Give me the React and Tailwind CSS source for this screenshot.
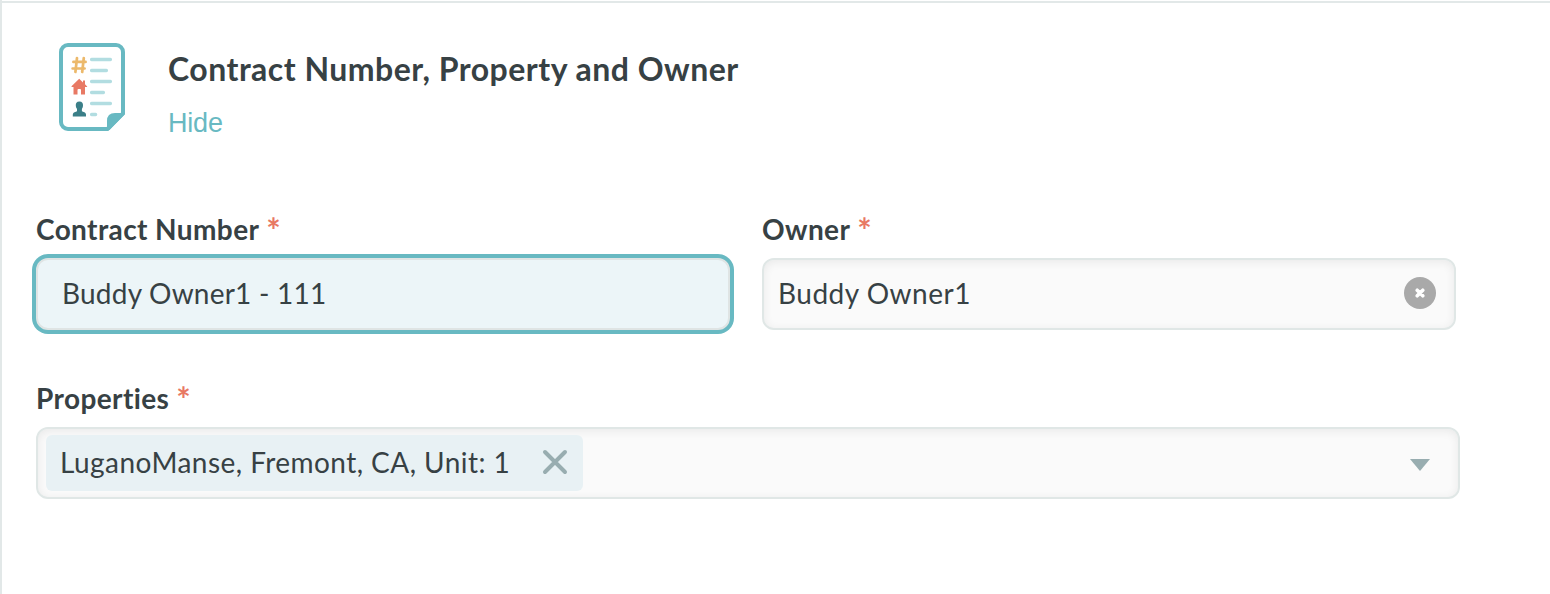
const ContractIcon = () => (
  <svg className="h-[88px] w-[66px] shrink-0" viewBox="0 0 66 88" fill="none">
    <path d="M9 2H57A7 7 0 0 1 64 9V70.5L48.5 86H9A7 7 0 0 1 2 79V9A7 7 0 0 1 9 2Z" stroke="#68b9c2" strokeWidth="4" />
    <path d="M48 87V78Q48 70 56 70H65.5V71.5L50.5 87Z" fill="#68b9c2" />
    {/* text lines */}
    <path
      d="M32.6 16.5H51.4M32.6 27.5H47.4M32.6 38.5H51.4M32.6 49.5H44.4M32.6 60.5H51.4M32.6 71.5H36.6"
      stroke="#b2dde1"
      strokeWidth="3.4"
      strokeLinecap="round"
    />
    <path d="M18 15L16.4 29M24.8 15L23.2 29M14.4 18.9H26.6M13.6 25.5H25.6" stroke="#ecb96b" strokeWidth="2.7" strokeLinecap="round" />
    <path
      d="M20.2 35.8L24 39.4V37.5H26V41.2L28.2 43.4Q28.4 44 27.6 44H26V51.5H22V47Q22 46 21 46H19.5Q18.5 46 18.5 47V51.5H14.5V44H13Q12.2 44 12.5 43.3Z"
      fill="#e87964"
    />
    <path
      d="M20.4 58.6C23.2 58.6 24.2 60.3 24 62.8C23.9 64.5 23.3 65.2 22.9 66V68.2C25.5 69.3 27 69.6 27 71.6V73.4H13.8V71.6C13.8 69.6 15.4 69.3 18 68.2V66C17.5 65.2 16.9 64.5 16.8 62.8C16.6 60.3 17.6 58.6 20.4 58.6Z"
      fill="#3b7f88"
    />
  </svg>
);

const Label = ({ children }) => (
  <label className="flex h-9 items-center gap-[7px] text-[28px] leading-9 font-bold tracking-[0.4px] whitespace-pre">
    {children}
    <span className="h-9 pt-px text-[34px] tracking-normal text-[#e87964]">*</span>
  </label>
);

const App = () => (
  <div
    className="h-[594px] w-full overflow-hidden border-l-2 border-[#e2e8e8] bg-white pt-px text-[#374144]"
    style={{ fontFamily: 'Lato, "Open Sans", sans-serif' }}
  >
    <div className="h-full border-t-2 border-[#e2e8e8] pl-[34px]">
      <div className="flex h-[208px] items-start pt-10 pl-[23px]">
        <ContractIcon />
        <div className="ml-[43px] pt-[5px]">
          <h2 className="text-[32px] leading-[42px] font-bold tracking-[0.49px] whitespace-nowrap">Contract Number, Property and Owner</h2>
          <button className="mt-[15px] block font-['Liberation_Sans'] text-[27px] leading-9 tracking-[-0.2px] text-[#68b9c2]">Hide</button>
        </div>
      </div>

      <div className="flex gap-8">
        <div className="w-[694px]">
          <Label>Contract Number</Label>
          <input
            className="mt-[11px] block h-[72px] w-full rounded-xl border-2 border-[#dfe4e4] bg-[#ecf5f8] px-6 pb-0.5 text-[28px] tracking-[0.22px] ring-4 ring-[#68b9c2] outline-none"
            defaultValue="Buddy Owner1 - 111"
          />
        </div>
        <div className="w-[694px]">
          <Label>Owner</Label>
          <div className="mt-[11px] flex h-[72px] items-center justify-between rounded-xl border-2 border-[#e0e7e6] bg-[#fafafa] pr-[18px] pl-[14px] text-[28px] tracking-[0.5px] shadow-[inset_0_2px_10px_rgba(0,0,0,0.07)]">
            <span className="pb-0.5">Buddy Owner1</span>
            <button className="mb-0.5 flex size-8 items-center justify-center rounded-full bg-[#a9a9a9]">
              <svg className="size-[10px]" viewBox="0 0 9 9">
                <path d="M2 2L7 7M7 2L2 7" stroke="white" strokeWidth="3.2" strokeLinecap="round" />
              </svg>
            </button>
          </div>
        </div>
      </div>

      <div className="mt-[50px] w-[1424px]">
        <Label>Properties</Label>
        <div className="mt-[11px] flex h-[72px] items-center justify-between rounded-xl border-2 border-[#e0e7e6] bg-[#fafafa] pr-7 pl-2 text-[28px] tracking-[0.45px] shadow-[inset_0_2px_10px_rgba(0,0,0,0.07)]">
          <div className="flex h-14 w-[537px] items-center justify-between rounded-md bg-[#e8f1f4] pr-[15px] pl-[14px]">
            <span className="pb-0.5 whitespace-nowrap">LuganoManse, Fremont, CA, Unit: 1</span>
            <svg className="mb-0.5 size-[26px]" viewBox="0 0 26 26">
              <path d="M3 3L23 23M23 3L3 23" stroke="#98adb0" strokeWidth="4" strokeLinecap="round" />
            </svg>
          </div>
          <svg className="mt-1 h-3 w-5" viewBox="0 0 20 12">
            <path d="M0 0H20L10 12Z" fill="#98adb0" />
          </svg>
        </div>
      </div>
    </div>
  </div>
);

export default App;
